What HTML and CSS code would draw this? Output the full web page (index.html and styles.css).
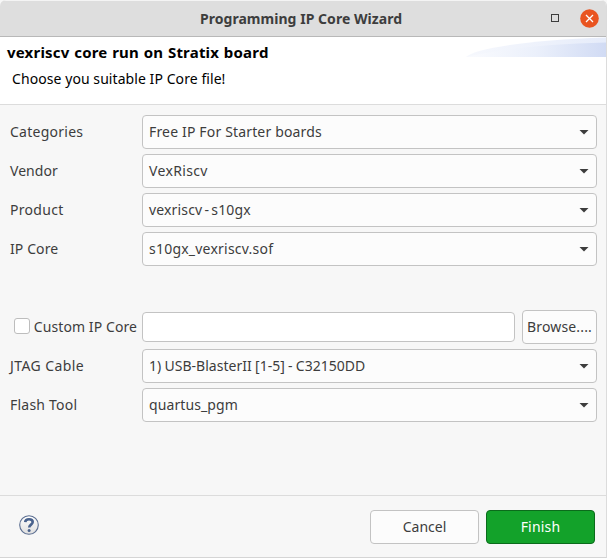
FILE: index.html
```
<!DOCTYPE html>
<html lang="en">
<head>
<meta charset="utf-8">
<title>Programming IP Core Wizard</title>
<link rel="stylesheet" href="styles.css">
</head>
<body>
<div class="window">
  <header class="titlebar">
    <h1 class="title"><span class="t-title">Programming IP Core Wizard</span></h1>
    <div class="controls">
      <svg class="maximize" width="8" height="8" viewBox="0 0 8 8"><rect x=".5" y=".5" width="7" height="7" fill="none" stroke="#3d3d3d"/></svg>
      <svg class="close" width="19" height="19" viewBox="0 0 19 19"><circle cx="9.5" cy="9.5" r="9.3" fill="#e95420"/><path d="M6 6l7 7M13 6l-7 7" stroke="#fff" stroke-width="1.3"/></svg>
    </div>
  </header>
  <section class="banner">
    <div class="banner-text">
      <h2><span class="t-heading">vexriscv core run on Stratix board</span></h2>
      <p><span class="t-choose">Choose you suitable IP Core file!</span></p>
    </div>
    <svg class="swoosh" width="140" height="20" viewBox="0 0 140 20">
      <defs>
        <linearGradient id="g1"><stop offset="0" stop-color="#f6f8fd"/><stop offset="1" stop-color="#e6ecfa"/></linearGradient>
        <linearGradient id="g2"><stop offset="0" stop-color="#fafbfe"/><stop offset=".5" stop-color="#ebf0fb"/><stop offset="1" stop-color="#d1dbf4"/></linearGradient>
      </defs>
      <path d="M0 20C8 12 60 3 140 0.5V20Z" fill="url(#g1)"/>
      <path d="M0 20C30 13 75 7 140 5.5V20Z" fill="url(#g2)"/>
    </svg>
  </section>
  <main class="form">
    <label><span class="t-categories">Categories</span></label>
    <div class="combo"><span class="t-free">Free IP For Starter boards</span><i class="arrow"></i></div>
    <label><span class="t-vendor">Vendor</span></label>
    <div class="combo"><span class="t-vex">VexRiscv</span><i class="arrow"></i></div>
    <label><span class="t-product">Product</span></label>
    <div class="combo"><span class="t-s10">vexriscv - s10gx</span><i class="arrow"></i></div>
    <label><span class="t-ipcore">IP Core</span></label>
    <div class="combo"><span class="t-sof">s10gx_vexriscv.sof</span><i class="arrow"></i></div>
    <div class="spacer"></div>
    <label class="check"><span class="box"></span><span class="t-custom">Custom IP Core</span></label>
    <div class="file-row"><div class="field"></div><div class="button browse"><span class="t-browse">Browse....</span></div></div>
    <label><span class="t-jtag">JTAG Cable</span></label>
    <div class="combo"><span class="t-usb">1) USB-BlasterII [1-5] - C32150DD</span><i class="arrow"></i></div>
    <label><span class="t-flash">Flash Tool</span></label>
    <div class="combo"><span class="t-quartus">quartus_pgm</span><i class="arrow"></i></div>
  </main>
  <footer class="footer">
    <svg class="help" width="20" height="20" viewBox="0 0 20 20">
      <defs><linearGradient id="g3" x2="0" y2="1"><stop offset="0" stop-color="#fff"/><stop offset="1" stop-color="#dedede"/></linearGradient></defs>
      <circle cx="10" cy="10" r="9.3" fill="url(#g3)" stroke="#5b6e91" stroke-width="1.1"/>
      <path d="M6.2 7.2C6.4 5 8 4.2 10 4.2c2.2 0 3.7 1 3.7 2.9 0 2.5-3.5 2.6-3.5 5.5" fill="none" stroke="#49628d" stroke-width="2.6"/>
      <circle cx="10.1" cy="15.5" r="1.5" fill="#49628d"/>
    </svg>
    <div class="button cancel"><span class="t-cancel">Cancel</span></div>
    <div class="button finish"><span class="t-finish">Finish</span></div>
  </footer>
</div>
</body>
</html>
```
FILE: styles.css
```
* { box-sizing: border-box; }
body {
  margin: 0;
  background: #f7f7f7;
  color: #3d3d3d;
  font: 14px/20px "Noto Sans", "Open Sans", sans-serif;
  white-space: nowrap;
}
h1, h2, p { margin: 0; font-size: 14px; }
h2 { font-size: 15px; }
.window {
  width: 607px;
  height: 558px;
  display: flex;
  flex-direction: column;
  border-right: 1px solid #dcdcdc;
  border-bottom: 1px solid #d5d5d5;
  border-radius: 6px 6px 0 0;
  overflow: hidden;
}
.titlebar {
  height: 37px;
  display: grid;
  grid-template-columns: 200px 1fr auto;
  align-items: center;
  margin-right: -1px;
  padding-right: 8px;
  background: #dedede;
  border-top: 1px solid #f4f4f4;
  border-bottom: 1px solid #b8b8b8;
}
.title { grid-column: 2; }
.controls { display: flex; align-items: center; gap: 21px; margin-top: -1px; }
.banner {
  height: 68px;
  display: flex;
  justify-content: space-between;
  background: #fff;
  border-bottom: 1px solid #dcdcdc;
  color: #000;
}
.banner-text { padding: 5px 0 0 7px; }
.banner-text p { padding: 7px 0 0 5px; }
.form {
  flex: 1;
  display: grid;
  grid-template-columns: 127px 455px;
  grid-auto-rows: 34px;
  column-gap: 5px;
  row-gap: 5px;
  align-items: center;
  align-content: start;
  padding: 10px 0 0 10px;
}
.combo, .button, .field {
  height: 34px;
  display: flex;
  align-items: center;
  border: 1px solid #c3c3c3;
  border-radius: 4px;
  background: #fcfcfc;
}
.combo { justify-content: space-between; padding: 0 7px 0 6px; }
.arrow {
  width: 10px;
  height: 5px;
  background: #3d3d3d;
  clip-path: polygon(0 0, 100% 0, 50% 100%);
}
.spacer { grid-column: 1 / 3; }
.check { display: flex; align-items: center; gap: 4px; padding-left: 4px; }
.box {
  width: 16px;
  height: 16px;
  margin-top: -2px;
  border: 1px solid #bdbdbd;
  border-radius: 3px;
  background: #fff;
}
.file-row { display: flex; align-items: center; gap: 7px; }
.field { width: 373px; height: 30px; background: #fff; }
.button { justify-content: center; }
.browse { width: 75px; }
.footer {
  height: 62px;
  display: flex;
  align-items: center;
  gap: 7px;
  padding: 0 11px 0 19px;
  border-top: 1px solid #dcdcdc;
}
.help { margin: 0 auto 4px 0; }
.cancel, .finish { width: 109px; }
.finish { background: #13a22a; border-color: #0b6b1b; color: #fff; }
.t-title { letter-spacing: 0.04px; }
.t-heading { letter-spacing: 0.2px; word-spacing: 0.6px; }
.t-choose { letter-spacing: 0.07px; }
.t-categories { letter-spacing: 0.25px; }
.t-free { letter-spacing: 0.16px; }
.t-vendor { letter-spacing: 0.05px; }
.t-vex { letter-spacing: 0.35px; }
.t-product { letter-spacing: 0.3px; }
.t-s10 { letter-spacing: 0.15px; word-spacing: -1.6px; }
.t-ipcore { letter-spacing: 0.1px; }
.t-sof { letter-spacing: 0.22px; }
.t-custom { letter-spacing: 0.08px; }
.t-jtag { letter-spacing: 0.42px; }
.t-flash { letter-spacing: 0.22px; }
.t-usb { letter-spacing: 0.03px; word-spacing: -0.5px; }
.t-quartus { letter-spacing: 0.1px; }
.t-browse { letter-spacing: 0.15px; }
.t-finish { letter-spacing: 0.2px; }
```
